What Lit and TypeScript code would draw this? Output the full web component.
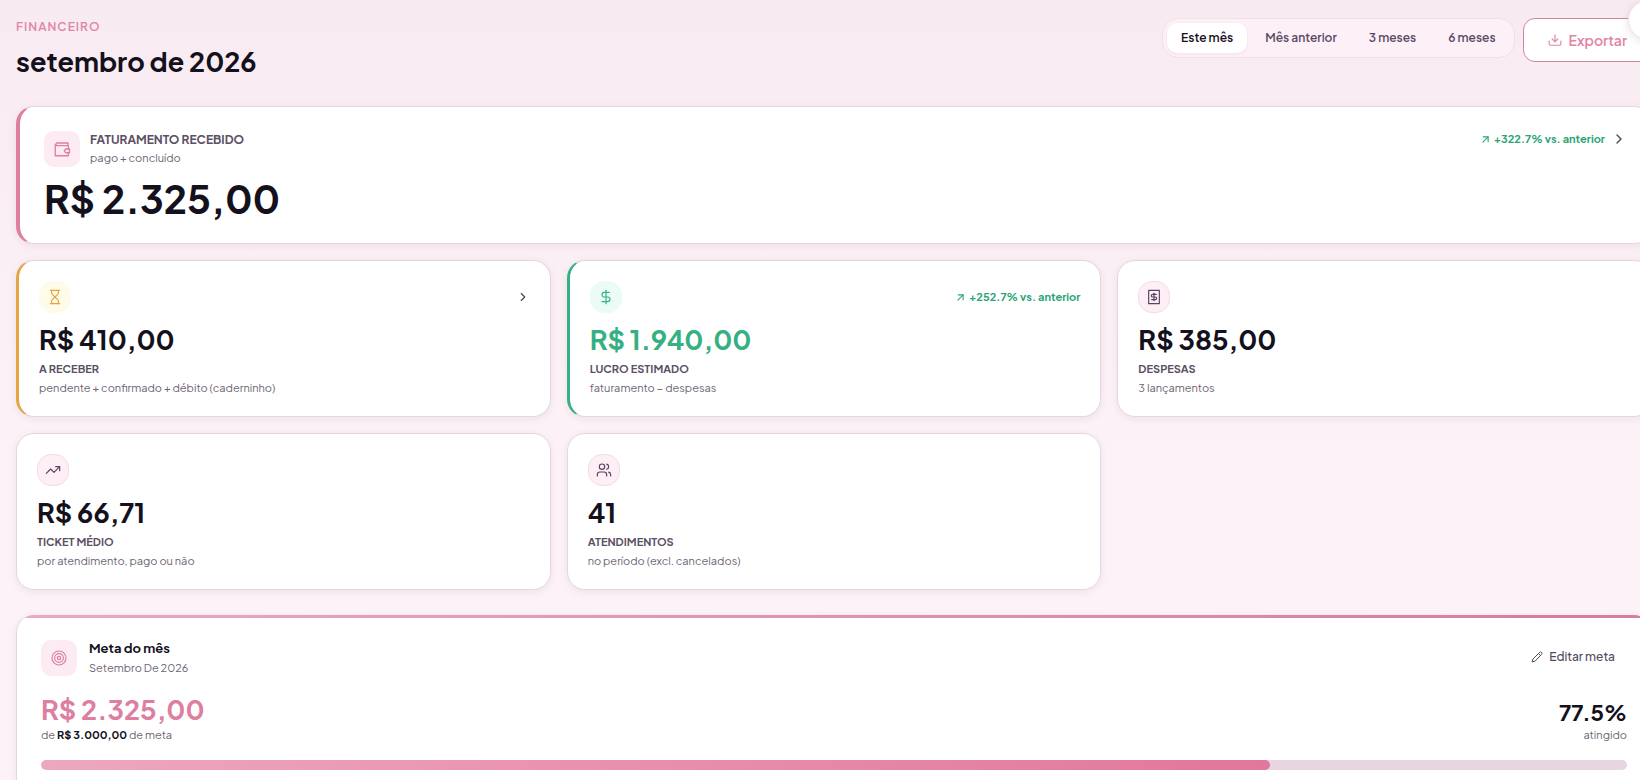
import { LitElement, html, css, svg, nothing } from "lit";
import { customElement, property, state } from "lit/decorators.js";
import { classMap } from "lit/directives/class-map.js";
import { styleMap } from "lit/directives/style-map.js";

const glyphs: Record<string, unknown> = {
  wallet: svg`<path d="M20 7.500V4H5a2 2 0 0 0 0 3.500h15.500V12"/><path d="M3 6v15h17.500v-4"/><path d="M17 12h5v5h-5l-2-2.500z"/>`,
  hourglass: svg`<path d="M5 22h14M5 2h14"/><path d="M17 22v-4.200a2 2 0 0 0-.6-1.400L12 12l-4.400 4.400a2 2 0 0 0-.6 1.400V22"/><path d="M7 2v4.200a2 2 0 0 0 .6 1.400L12 12l4.400-4.400a2 2 0 0 0 .6-1.400V2"/>`,
  dollar: svg`<path d="M12 2v20"/><path d="M17 5H9.500a3.500 3.500 0 0 0 0 7h5a3.500 3.500 0 0 1 0 7H6"/>`,
  receipt: svg`<path d="M4 2h16v20H4z"/><path d="M15.500 8h-5.500a2 2 0 0 0 0 4h4a2 2 0 0 1 0 4H8.500"/><path d="M12 6.500v11"/>`,
  trend: svg`<path d="M22 7l-8.500 8.500-5-5L2 17"/><path d="M16 7h6v6"/>`,
  users: svg`<path d="M16 21v-2a4 4 0 0 0-4-4H6a4 4 0 0 0-4 4v2"/><circle cx="9" cy="7" r="4"/><path d="M22 21v-2a4 4 0 0 0-3-3.870"/><path d="M16 3.130a4 4 0 0 1 0 7.750"/>`,
  target: svg`<circle cx="12" cy="12" r="10.500"/><circle cx="12" cy="12" r="6.500"/><circle cx="12" cy="12" r="2.500"/>`,
  pencil: svg`<path d="M21.200 6.800a2.800 2.800 0 0 0-4-4L3.800 16.200 2 22l5.800-1.800z"/><path d="M15 5l4 4"/>`,
  download: svg`<path d="M12 3v12"/><path d="M7 10l5 5 5-5"/><path d="M22 14v5a2 2 0 0 1-2 2H4a2 2 0 0 1-2-2v-5"/>`,
  chevron: svg`<path d="M9 18l6-6-6-6"/>`,
  up: svg`<path d="M5 19L19 5"/><path d="M6 5h13v13"/>`,
};

const icon = (name: string, size: number, weight = 2) => html`<svg
  width=${size} height=${size} viewBox="0 0 24 24" fill="none" stroke="currentColor"
  stroke-width=${weight} stroke-linecap="round" stroke-linejoin="round" aria-hidden="true"
>${glyphs[name]}</svg>`;

const shared = css`
  * { box-sizing: border-box; }
  h1, h2, p { margin: 0; }
  svg { display: block; flex: none; }
  button { font: inherit; cursor: pointer; }
  .delta { display: flex; align-items: center; gap: 4px; color: #2ba575; font-size: 11px; line-height: 16px; font-weight: 700; }
`;

@customElement("stat-card")
class StatCard extends LitElement {
  static styles = [shared, css`
    :host { display: block; }
    .card { height: 100%; padding: 20px; background: #fff; border: 1px solid #e6d5e1; border-radius: 18px; box-shadow: 0 2px 8px rgba(70, 30, 60, 0.07); }
    .amber { border-left: 3px solid #e5a544; }
    .green { border-left: 3px solid #36b083; }
    .top { display: flex; align-items: center; justify-content: space-between; margin-bottom: 8px; }
    .tile { display: grid; place-items: center; width: 32px; height: 32px; border-radius: 14px; color: #5a4361; background: #fdeff5; border: 1px solid #f4dce7; }
    .amber .tile { color: #e5a544; background: #fffbe9; border-color: #fffbe9; }
    .green .tile { color: #36b083; background: #eafcf5; border-color: #eafcf5; }
    .value { font-size: 27px; line-height: 36px; font-weight: 700; color: #14111d; }
    .green .value { color: #36b083; }
    .label { margin-top: 4px; font-size: 11px; line-height: 16px; font-weight: 700; color: #5b5065; text-transform: uppercase; }
    .note { margin-top: 3px; font-size: 11px; line-height: 16px; color: #6d6474; }
    .go { color: #4d4357; }
  `];
  @property() tone = "";
  @property() glyph = "";
  @property() value = "";
  @property() label = "";
  @property() note = "";
  @property() delta = "";
  @property({ type: Boolean }) linked = false;

  render() {
    return html`<article class="card ${this.tone}">
      <div class="top">
        <span class="tile">${icon(this.glyph, 16, 1.75)}</span>
        ${this.delta ? html`<span class="delta">${icon("up", 9, 3)}${this.delta}</span>` : nothing}
        ${this.linked ? html`<span class="go">${icon("chevron", 14)}</span>` : nothing}
      </div>
      <p class="value">${this.value}</p>
      <h2 class="label">${this.label}</h2>
      <p class="note">${this.note}</p>
    </article>`;
  }
}

@customElement("app-root")
class AppRoot extends LitElement {
  static styles = [shared, css`
    :host { display: block; position: relative; height: 100vh; overflow: hidden; color: #14111d; background: linear-gradient(#f8eaf1, #f9edf3 14%, #fcf2f8 60%); font-family: "Plus Jakarta Sans", Inter, "Open Sans", sans-serif; }
    .page { margin: 0 -12px 0 16px; padding-top: 18px; }
    .header { display: flex; justify-content: space-between; align-items: flex-start; height: 88px; }
    .eyebrow { font-size: 12px; line-height: 18px; letter-spacing: 1px; font-weight: 600; color: #df86a5; }
    .title { margin-top: 5px; font-size: 27px; line-height: 40px; font-weight: 700; }
    .actions { display: flex; align-items: flex-start; gap: 8px; }
    .tabs { display: flex; gap: 4px; padding: 4px; background: #fdf1f7; border: 1px solid #f3dfe9; border-radius: 16px; }
    .tab { height: 30px; padding: 0 14px 2px; border: 0; border-radius: 10px; background: none; font-size: 12px; font-weight: 600; color: #5c4a66; }
    .on { background: #fff; color: #14111d; box-shadow: 0 1px 3px rgba(70, 30, 60, 0.08); }
    .export { display: flex; align-items: center; gap: 7px; height: 44px; padding: 0 24px; background: #fff; border: 1px solid #cb85a5; border-radius: 12px; font-size: 14px; font-weight: 600; color: #df86a5; }
    .float { position: absolute; top: 0; right: -28px; width: 40px; height: 40px; border: 1px solid #eee3ea; border-radius: 50%; background: #fff; box-shadow: 0 2px 8px rgba(70, 30, 60, 0.12); }
    .hero { display: flex; justify-content: space-between; align-items: flex-start; height: 138px; padding: 24px 24px 0; background: #fff; border: 1px solid #e6d5e1; border-left: 4px solid #df7f9f; border-radius: 18px; box-shadow: 0 2px 8px rgba(70, 30, 60, 0.07); }
    .lead { display: flex; gap: 10px; }
    .tile { display: grid; place-items: center; width: 36px; height: 36px; border-radius: 10px; color: #dd7fa0; background: #fcebf2; }
    .name { font-size: 12px; line-height: 17px; font-weight: 700; color: #5b5065; }
    .note { margin-top: 2px; font-size: 11px; line-height: 16px; color: #6d6474; }
    .total { margin-top: 6px; font-size: 39px; line-height: 52px; font-weight: 700; }
    .trend { display: flex; align-items: center; gap: 6px; color: #4d4357; }
    .grid { display: grid; grid-template-columns: repeat(3, minmax(0, 1fr)); gap: 16px; margin: 16px 0 25px; }
    .goal { padding-bottom: 24px; background: #fff; border: 1px solid #e6d5e1; border-top: 0; border-radius: 18px; overflow: hidden; box-shadow: 0 2px 8px rgba(70, 30, 60, 0.07); }
    .stripe { height: 3px; background: linear-gradient(90deg, #eba8c0, #d67c9d); }
    .inner { padding: 22px 24px 0; }
    .row { display: flex; justify-content: space-between; align-items: center; }
    .goal-name { margin-bottom: 4px; font-size: 13px; line-height: 16px; font-weight: 700; }
    .goal .lead { gap: 12px; }
    .edit { display: flex; align-items: center; gap: 6px; padding: 5px 12px 7px; border: 0; background: none; font-size: 12px; line-height: 16px; font-weight: 500; color: #55495f; }
    .sums { align-items: flex-end; margin: 16px 0 17px; }
    .reached { font-size: 27px; line-height: 35px; font-weight: 700; color: #dd7fa0; }
    .percent { font-size: 22px; line-height: 30px; font-weight: 700; }
    .small { font-size: 11px; line-height: 16px; color: #6d6474; }
    .small strong { color: #14111d; }
    .right { text-align: right; }
    .track { height: 10px; border-radius: 5px; background: #e8d5e2; overflow: hidden; }
    .fill { height: 100%; border-radius: 5px; background: linear-gradient(90deg, #eda7c1, #e2779b); }
  `];
  @state() private range = "Este mês";
  private ranges = ["Este mês", "Mês anterior", "3 meses", "6 meses"];
  private progress = 77.5;

  render() {
    return html`<main class="page">
      <header class="header">
        <div>
          <p class="eyebrow">FINANCEIRO</p>
          <h1 class="title">setembro de 2026</h1>
        </div>
        <div class="actions">
          <div class="tabs">
            ${this.ranges.map((r) => html`<button class=${classMap({ tab: true, on: r === this.range })}
              aria-pressed=${r === this.range} @click=${() => (this.range = r)}>${r}</button>`)}
          </div>
          <button class="export">${icon("download", 14)}Exportar</button>
        </div>
      </header>
      <section class="hero">
        <div>
          <div class="lead">
            <span class="tile">${icon("wallet", 18, 1.75)}</span>
            <div>
              <h2 class="name">FATURAMENTO RECEBIDO</h2>
              <p class="note">pago + concluído</p>
            </div>
          </div>
          <p class="total">R$ 2.325,00</p>
        </div>
        <div class="trend"><span class="delta">${icon("up", 9, 3)}+322.7% vs. anterior</span>${icon("chevron", 16)}</div>
      </section>
      <section class="grid">
        <stat-card tone="amber" glyph="hourglass" value="R$ 410,00" label="A receber" note="pendente + confirmado + débito (caderninho)" linked></stat-card>
        <stat-card tone="green" glyph="dollar" value="R$ 1.940,00" label="Lucro estimado" note="faturamento − despesas" delta="+252.7% vs. anterior"></stat-card>
        <stat-card glyph="receipt" value="R$ 385,00" label="Despesas" note="3 lançamentos"></stat-card>
        <stat-card glyph="trend" value="R$ 66,71" label="Ticket médio" note="por atendimento, pago ou não"></stat-card>
        <stat-card glyph="users" value="41" label="Atendimentos" note="no período (excl. cancelados)"></stat-card>
      </section>
      <section class="goal">
        <div class="stripe"></div>
        <div class="inner">
          <div class="row">
            <div class="lead">
              <span class="tile">${icon("target", 16, 1.75)}</span>
              <div>
                <h2 class="goal-name">Meta do mês</h2>
                <p class="small">Setembro De 2026</p>
              </div>
            </div>
            <button class="edit">${icon("pencil", 12)}Editar meta</button>
          </div>
          <div class="row sums">
            <div>
              <p class="reached">R$ 2.325,00</p>
              <p class="small">de <strong>R$ 3.000,00</strong> de meta</p>
            </div>
            <div class="right">
              <p class="percent">77.5%</p>
              <p class="small">atingido</p>
            </div>
          </div>
          <div class="track" role="progressbar" aria-label="Meta do mês" aria-valuenow=${this.progress}>
            <div class="fill" style=${styleMap({ width: `${this.progress}%` })}></div>
          </div>
        </div>
      </section>
    </main>
    <button class="float" aria-label="Abrir"></button>`;
  }
}
